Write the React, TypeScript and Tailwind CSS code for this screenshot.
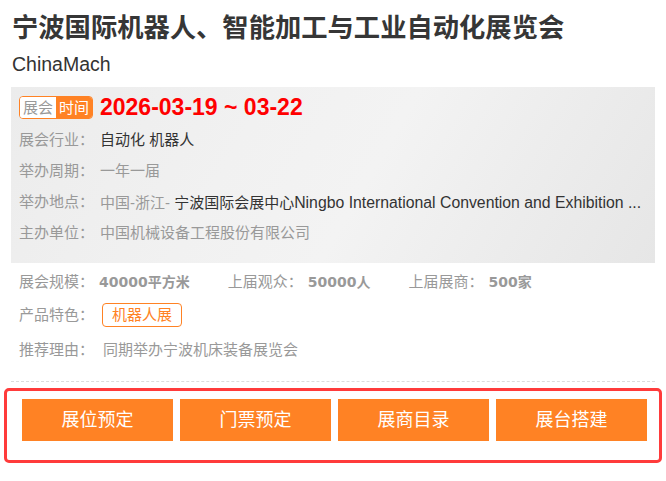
const cjk = 'font-["Liberation_Sans","Noto_Sans_CJK_SC",sans-serif]';

const infoRows: { label: string; value: React.ReactNode }[] = [
  { label: '展会行业：', value: <span className="text-[#333]">自动化 机器人</span> },
  { label: '举办周期：', value: <span className="text-[#999]">一年一届</span> },
  {
    label: '举办地点：',
    value: (
      <>
        <span className="text-[#999]">中国-浙江- </span>
        <span className="text-[#333]">
          宁波国际会展中心<span className="text-[15.8px]">Ningbo International Convention and Exhibition ...</span>
        </span>
      </>
    ),
  },
  { label: '主办单位：', value: <span className="text-[#999]">中国机械设备工程股份有限公司</span> },
];

const stats = [
  { label: '展会规模：', value: '40000平方米' },
  { label: '上届观众：', value: '50000人' },
  { label: '上届展商：', value: '500家' },
];

const actions = ['展位预定', '门票预定', '展商目录', '展台搭建'];

export default function App() {
  return (
    <div className={`w-[666px] h-[481px] bg-white overflow-hidden ${cjk}`}>
      <div className="pl-[12px] pt-[12px]">
        <h1 className="h-[33px] leading-[33px] text-[26.3px] font-bold text-[#363636] whitespace-nowrap">
          宁波国际机器人、智能加工与工业自动化展览会
        </h1>
        <div className="mt-[5px] h-[28px] leading-[28px] text-[19.5px] text-[#333]">ChinaMach</div>
      </div>

      <div className="mx-[11px] mt-[9px] h-[176px] pt-[9px] pl-[8px] pr-[10px] bg-[#efefef] bg-[linear-gradient(120deg,#ececec_0%,#f1f1f1_35%,#f3f3f3_55%,#ededed_75%,#e6e6e6_100%)]">
        <div className="flex items-center h-[23px]">
          <div className="flex h-[23px] w-[74px] rounded-[4px] border border-[#ff8224] overflow-hidden text-[15px] leading-[21px]">
            <span className="flex-1 bg-white text-[#999] text-center">展会</span>
            <span className="flex-1 bg-[#ff8224] text-white text-center">时间</span>
          </div>
          <span className="ml-[7px] text-[23px] font-bold text-[#ff0000] leading-[23px] font-['Liberation_Sans',sans-serif]">
            2026-03-19 ~ 03-22
          </span>
        </div>
        <div className="mt-[6px]">
          {infoRows.map((r) => (
            <div key={r.label} className="flex h-[31px] items-center text-[15px] whitespace-nowrap">
              <span className="w-[81px] shrink-0 text-[#999]">{r.label}</span>
              <span>{r.value}</span>
            </div>
          ))}
        </div>
      </div>

      <div className="mx-[11px] mt-[4px] pl-[8px] text-[15px]">
        <div className="flex h-[30px] items-center">
          {stats.map((s) => (
            <div key={s.label} className="flex items-center mr-[38px]">
              <span className="w-[80px] text-[#999]">{s.label}</span>
              <span className="font-bold text-[14px] text-[#999] font-['DejaVu_Sans','Noto_Sans_CJK_SC',sans-serif]">{s.value}</span>
            </div>
          ))}
        </div>
        <div className="flex h-[36px] items-center">
          <span className="w-[83px] text-[#999]">产品特色：</span>
          <span className="h-[24px] px-[9px] leading-[22px] rounded-[4px] border border-[#ff8224] text-[#ff8224] text-[15px]">
            机器人展
          </span>
        </div>
        <div className="flex h-[34px] items-center">
          <span className="w-[84px] text-[#999]">推荐理由：</span>
          <span className="text-[#999] text-[15px]">同期举办宁波机床装备展览会</span>
        </div>
      </div>

      <div className="mx-[11px] mt-[14px] border-t border-dashed border-[#dcdcdc]" />

      <div className="mx-[4px] mt-[6px] h-[75px] rounded-[5px] border-[3px] border-[#ff3b3b] pl-[15px] pt-[8px]">
        <div className="flex gap-[7px]">
          {actions.map((a) => (
            <button
              key={a}
              type="button"
              className="w-[151px] h-[42px] bg-[#ff8224] text-white text-[18px] flex items-center justify-center"
            >
              {a}
            </button>
          ))}
        </div>
      </div>
    </div>
  );
}
